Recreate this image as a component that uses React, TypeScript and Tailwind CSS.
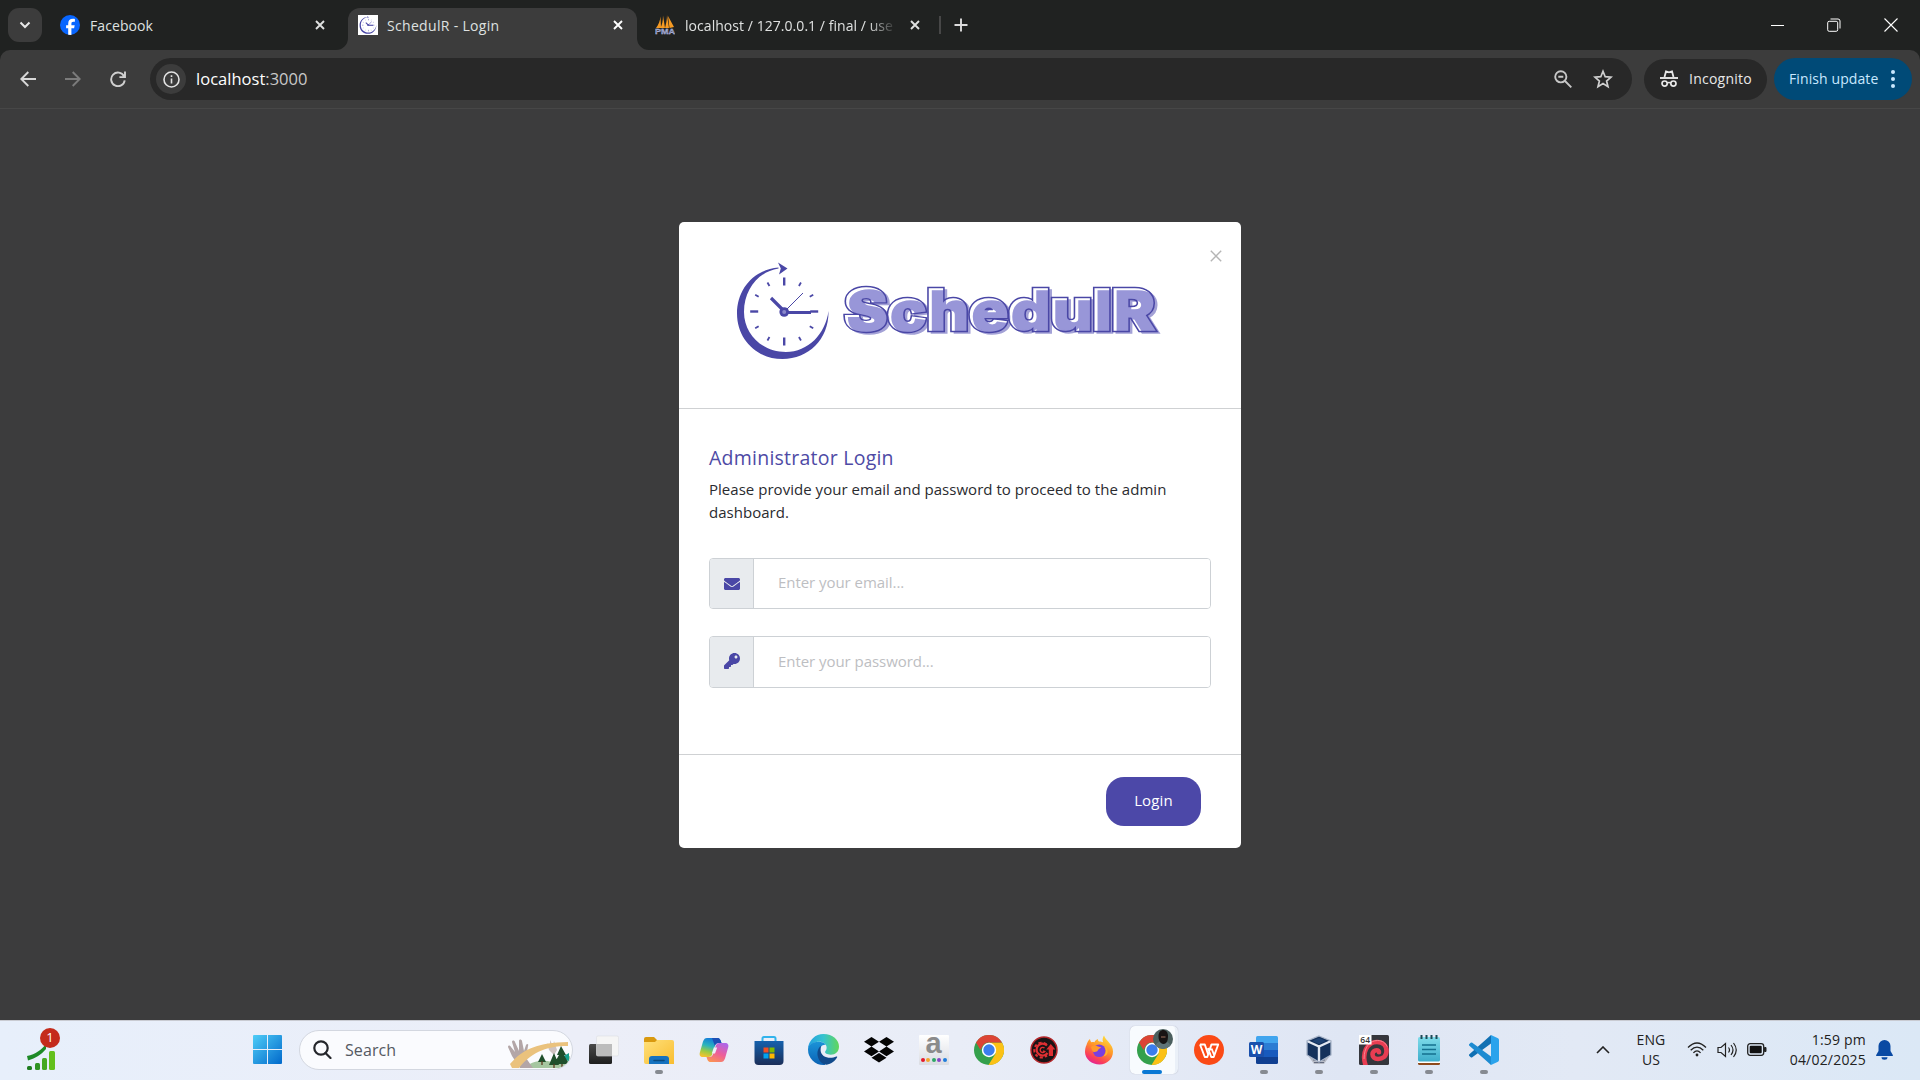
import React from "react";

const UI = "font-['Open_Sans','Noto_Sans',sans-serif]";

function X({ className = "" }: { className?: string }) {
  return (
    <svg width="12" height="12" viewBox="0 0 12 12" className={className}>
      <path d="M2 2l8 8M10 2l-8 8" stroke="currentColor" strokeWidth="1.9" fill="none" />
    </svg>
  );
}

function ClockArt({ className = "", favicon = false }: { className?: string; favicon?: boolean }) {
  const ticks = [30, 60, 120, 150, 210, 240, 300, 330];
  return (
    <svg viewBox="0 0 94 98" className={className} fill="#4a47a6">
      <path d="M42.5 5.5C18 7.5 1 27 1 51.500C1 77 20.500 97 46.500 97C73 97 93 77 92.500 49C89.500 72 72 90 50 90C26.500 90 8 72.500 8 50C8 27.500 22.500 9.500 42.500 6.500Z" />
      <path d="M42 .5l9.500 6-8.500 6 1.800-6z" />
      {[0, 90, 180, 270].map((a) => (
        <rect key={a} x="47" y="15.500" width="2.400" height="8" transform={`rotate(${a} 48.200 49.500)`} />
      ))}
      {ticks.map((a) => (
        <rect key={a} x="47.300" y="16" width="1.800" height="4" transform={`rotate(${a} 48.200 49.500)`} />
      ))}
      <path d="M35 36l14 14" stroke="#4a47a6" strokeWidth={favicon ? 6 : 3.2} />
      <path d="M48 50.500h27" stroke="#4a47a6" strokeWidth={favicon ? 6 : 3} />
      <path d="M48 50l19-19" stroke="#4a47a6" strokeWidth={favicon ? 3 : 1} />
      <circle cx="48.200" cy="50" r="4.800" />
      <circle cx="48.200" cy="50" r="2" fill="#8a88ca" />
    </svg>
  );
}

function Wordmark() {
  const t = {
    fontFamily: "Inter, sans-serif",
    fontWeight: 900,
    fontSize: 56.5,
  } as React.CSSProperties;
  return (
    <svg width="320" height="56" viewBox="0 0 320 56" className="overflow-visible">
      <mask id="wm" maskUnits="userSpaceOnUse" x="-5" y="-10" width="330" height="70">
        <text x="2" y="45" textLength="311" lengthAdjust="spacingAndGlyphs" style={t} fill="#fff" stroke="#fff" strokeWidth="1.600">SchedulR</text>
      </mask>
      <text x="5" y="46.500" textLength="311" lengthAdjust="spacingAndGlyphs" style={t} fill="#a3a1d6" stroke="#a3a1d6" strokeWidth="3.500" aria-hidden="true">SchedulR</text>
      <text x="2" y="45" textLength="311" lengthAdjust="spacingAndGlyphs" style={t} fill="#4a47a6" stroke="#4a47a6" strokeWidth="4.400">SchedulR</text>
      <g mask="url(#wm)">
        <rect x="-5" y="-10" width="330" height="70" fill="#fff" />
        <text x="5" y="47" textLength="311" lengthAdjust="spacingAndGlyphs" style={t} fill="#9896d8" stroke="#9896d8" strokeWidth="1.600" aria-hidden="true">SchedulR</text>
      </g>
    </svg>
  );
}

function TabStrip() {
  return (
    <div className="flex h-[50px] items-start bg-[#202221] text-[14px] text-[#dfe1e0]">
      <div className="ml-2 mt-2 flex h-[34px] w-[34px] items-center justify-center rounded-[11px] bg-[#3c3c3c]">
        <svg width="12" height="8" viewBox="0 0 12 8"><path d="M1.500 1.500L6 6l4.500-4.500" stroke="#e8e8e8" strokeWidth="2" fill="none" /></svg>
      </div>
      <div className="mt-2 flex h-[34px] w-[306px] items-center pl-[18px]">
        <svg width="20" height="20" viewBox="0 0 20 20">
          <circle cx="10" cy="10" r="10" fill="#0866ff" />
          <path d="M8.200 19.800v-6.500H6.100V10.200h2.100V8.800c0-3.400 1.500-5 4.900-5 .6 0 1.400.1 1.800.2v2.800h-1.500c-1.600 0-2 .7-2 2.100v1.300h3.300l-.6 3.100h-2.700v6.600z" fill="#fff" />
        </svg>
        <span className="ml-[10px] w-[224px] tracking-[0.08px]">Facebook</span>
        <X />
      </div>
      <div className="relative mt-2 flex h-[42px] w-[289px] items-start rounded-t-[12px] bg-[#3c3c3c]">
        <svg width="12" height="12" className="absolute -left-3 bottom-0"><path d="M12 0v12H0A12 12 0 0 0 12 0" fill="#3c3c3c" /></svg>
        <svg width="12" height="12" className="absolute -right-3 bottom-0"><path d="M0 0v12h12A12 12 0 0 1 0 0" fill="#3c3c3c" /></svg>
        <div className="flex h-[34px] items-center pl-[10px]">
          <div className="flex h-5 w-5 items-center justify-center bg-white"><ClockArt favicon className="h-[18px] w-[18px]" /></div>
          <span className="ml-[9px] w-[225px] tracking-[0.32px]">SchedulR - Login</span>
          <X className="text-white" />
        </div>
      </div>
      <div className="mt-2 flex h-[34px] items-center pl-[18px]">
        <svg width="20" height="20" viewBox="0 0 20 20">
          <path d="M5.500 1.500C5 6 3.500 10 1 13h5z M8 .5C8 6 7 10 5.500 13H10z M12 0c0 5-1 9-2 13h4z M13 1l6 11-4.500 1z" fill="#f59a23" />
          <text x="0" y="19" fontSize="8" fontWeight="700" textLength="20" lengthAdjust="spacingAndGlyphs" fill="#6c78af" stroke="#d6d9ee" strokeWidth=".3" fontFamily="Liberation Sans, sans-serif">PMA</text>
        </svg>
        <span className="ml-[10px] w-[208px] whitespace-nowrap tracking-[0.05px] [mask-image:linear-gradient(to_right,black_88%,transparent_102%)]">localhost / 127.0.0.1 / final / use</span>
        <X className="ml-4" />
        <div className="ml-[18px] h-[18px] w-[2px] bg-[#474747]" />
        <svg width="14" height="14" viewBox="0 0 14 14" className="ml-[13px]"><path d="M7 .5v13M.5 7h13" stroke="#dcdcdc" strokeWidth="1.900" /></svg>
      </div>
      <div className="ml-auto flex h-[50px] items-center pr-[22px] text-white">
        <svg width="13" height="13" viewBox="0 0 13 13"><path d="M0 6.500h13" stroke="currentColor" strokeWidth="1" /></svg>
        <svg width="14" height="14" viewBox="0 0 14 14" className="ml-[43px]" fill="none" stroke="currentColor"><rect x=".7" y="3.300" width="10" height="10" rx="1.500" /><path d="M3.500 1h7.500a2 2 0 0 1 2 2v7.500" /></svg>
        <svg width="14" height="14" viewBox="0 0 14 14" className="ml-[43px]"><path d="M.5.500l13 13M13.500.500l-13 13" stroke="currentColor" strokeWidth="1.100" /></svg>
      </div>
    </div>
  );
}

function Toolbar() {
  return (
    <div className="bg-[#202221]">
      <div className="flex h-[59px] items-center rounded-t-[10px] border-b border-[#474747] bg-[#3c3c3c] pl-[20px] pr-2">
        <svg width="16" height="16" viewBox="0 0 16 16" fill="none" stroke="#d8d8d8" strokeWidth="1.900"><path d="M16 8H1.500M8.300 1L1.300 8l7 7" /></svg>
        <svg width="16" height="16" viewBox="0 0 16 16" className="ml-[29px]" fill="none" stroke="#7b7b7b" strokeWidth="1.900"><path d="M0 8h14.500M7.700 1l7 7-7 7" /></svg>
        <svg width="16" height="16" viewBox="0 0 16 16" className="ml-[29px]" fill="none" stroke="#d0d0d0" strokeWidth="1.900"><path d="M14 5.200A6.800 6.800 0 1 0 14.700 9.300M15 .5v5.600H9.400" /></svg>
        <div className="ml-[24px] flex h-[42px] w-[1482px] items-center rounded-full bg-[#282828] pl-[6px] text-[16.500px]">
          <div className="flex h-[30px] w-[30px] items-center justify-center rounded-full bg-[#3c3c3c]">
            <svg width="17" height="17" viewBox="0 0 17 17"><circle cx="8.500" cy="8.500" r="7.500" fill="none" stroke="#e3e3e3" strokeWidth="1.600" /><path d="M8.500 7.500v5M8.500 4.300v1.800" stroke="#e3e3e3" strokeWidth="1.600" /></svg>
          </div>
          <span className="ml-[10px] tracking-[0.02px] text-[#c9c9c9]"><span className="text-white">localhost</span>:3000</span>
          <svg width="18" height="18" viewBox="0 0 18 18" className="ml-auto" fill="none" stroke="#c7c7c7" strokeWidth="1.900"><circle cx="6.800" cy="6.800" r="5.600" /><path d="M11 11l6.300 6.300M4.300 6.800h5" /></svg>
          <svg width="20" height="20" viewBox="0 0 20 20" className="ml-[21px] mr-[19px]" fill="none" stroke="#d0d0d0" strokeWidth="1.700"><path d="M10 2.300l2.200 5.400 5.800.5-4.400 3.800 1.400 5.700-5-3.100-5 3.100 1.400-5.700L2 8.200l5.800-.5z" /></svg>
        </div>
        <div className="ml-3 flex h-[41px] w-[123px] items-center rounded-full bg-[#282828] pl-[16px] text-[14px] text-[#e8e8e8]">
          <svg width="18" height="18" viewBox="0 0 18 18" fill="none" stroke="#e8e8e8"><path d="M4.500 7l1.500-5.500 3 .9 3-.9L13.500 7" strokeWidth="1.800" /><path d="M0 8h18" strokeWidth="1.900" /><circle cx="4.600" cy="13.600" r="2.600" strokeWidth="1.700" /><circle cx="13.400" cy="13.600" r="2.600" strokeWidth="1.700" /><path d="M7 13q2-1 4 0" strokeWidth="1.500" /></svg>
          <span className="-mt-px ml-[11px] tracking-[0.25px]">Incognito</span>
        </div>
        <div className="ml-[7px] flex h-[42px] w-[138px] items-center rounded-full bg-[#004a77] pl-[15px] text-[14px] text-[#c8e8ff]">
          <span className="-mt-px whitespace-nowrap tracking-[0.1px]">Finish update</span>
          <div className="ml-auto mr-[17px] flex flex-col gap-[3px]">
            <i className="h-[4px] w-[4px] rounded-full bg-[#c8e8ff]" /><i className="h-[4px] w-[4px] rounded-full bg-[#c8e8ff]" /><i className="h-[4px] w-[4px] rounded-full bg-[#c8e8ff]" />
          </div>
        </div>
      </div>
    </div>
  );
}

function Field({ icon, placeholder, className }: { icon: React.ReactNode; placeholder: string; className: string }) {
  return (
    <div className={`flex overflow-hidden rounded-[4px] border border-[#cdd1d5] ${className}`}>
      <div className="flex w-[44px] items-center justify-center border-r border-[#cdd1d5] bg-[#e8ebee]">{icon}</div>
      <input placeholder={placeholder} className="min-w-0 flex-1 bg-white px-6 pb-[2px] text-[15px] tracking-[-0.05px] outline-none placeholder:text-[#bdbec2]" />
    </div>
  );
}

function LoginModal() {
  return (
    <div className="mt-[113px] flex h-[626px] w-[562px] flex-col rounded-[5px] bg-white text-[#2a2b2f]">
      <div className="flex h-[187px] border-b border-[#cfd1d3]">
        <ClockArt className="ml-[57px] mt-[40px] h-[98px] w-[94px]" />
        <div className="ml-[12px] mt-[63px] h-[56px] w-[320px]"><Wordmark /></div>
        <svg width="12" height="12" viewBox="0 0 12 12" className="ml-[48px] mt-[28px]"><path d="M.8.800l10.400 10.400M11.200.800L.8 11.200" stroke="#b5b5b5" strokeWidth="1.400" /></svg>
      </div>
      <div className="h-[345px] px-[30px] pt-[34px]">
        <h5 className="whitespace-nowrap text-[19.500px] font-medium leading-[30px] tracking-[0.24px] text-[#4e4aa5]">Administrator Login</h5>
        <p className="mt-[5px] text-[15px] leading-[23px] tracking-[0.03px]">Please provide your email and password to proceed to the admin<br />dashboard.</p>
        <Field className="mt-[34px] h-[51px]" placeholder="Enter your email..." icon={
          <svg width="16" height="16" viewBox="0 0 512 512" fill="#4a47a6"><path d="M502.300 190.800c3.900-3.100 9.700-.2 9.700 4.700V400c0 26.500-21.500 48-48 48H48c-26.500 0-48-21.500-48-48V195.600c0-5 5.700-7.800 9.700-4.700 22.400 17.400 52.100 39.500 154.100 113.600 21.100 15.400 56.700 47.800 92.200 47.600 35.700.3 72-32.800 92.300-47.600 102-74.100 131.600-96.300 154-113.700zM256 320c23.200.4 56.600-29.200 73.400-41.400 132.700-96.300 142.800-104.700 173.400-128.700 5.800-4.500 9.200-11.500 9.200-18.900v-19c0-26.500-21.500-48-48-48H48c-26.500 0-48 21.500-48 48v19c0 7.400 3.400 14.300 9.200 18.900 30.600 23.900 40.700 32.400 173.400 128.700 16.800 12.200 50.200 41.800 73.400 41.400z" /></svg>
        } />
        <Field className="mt-[27px] h-[52px]" placeholder="Enter your password..." icon={
          <svg width="16" height="16" viewBox="0 0 512 512" className="-mt-[2px]" fill="#4a47a6"><path d="M512 176c0 97.200-78.800 176-176 176-11.200 0-22.200-1.100-32.800-3.100l-24 27A24 24 0 0 1 261.200 384H224v40c0 13.300-10.700 24-24 24h-40v40c0 13.300-10.700 24-24 24H24c-13.300 0-24-10.700-24-24v-78c0-6.400 2.500-12.500 7-17l161.800-161.800C162.800 213.800 160 195.200 160 176 160 78.800 238.800 0 336 0c97.500 0 176 78.500 176 176zM336 128c0 26.500 21.500 48 48 48s48-21.500 48-48-21.500-48-48-48-48 21.500-48 48z" /></svg>
        } />
      </div>
      <div className="flex flex-1 items-start justify-end border-t border-[#cfd1d3] pr-[40px] pt-[22px]">
        <button className="h-[49px] w-[95px] rounded-[18px] bg-[#4c48a8] pb-[2px] text-[15px] tracking-[0.15px] text-white">Login</button>
      </div>
    </div>
  );
}

function Chrome() {
  return (
    <svg width="30" height="30" viewBox="0 0 30 30">
      <circle cx="15" cy="15" r="15" fill="#34a04c" />
      <path d="M15 7.500h13A15 15 0 0 1 14.500 30L21.500 18.700z" fill="#fbc116" />
      <path d="M2 7.500A15 15 0 0 1 28 7.500H15A7.500 7.500 0 0 0 8.300 11.500L6.500 15z" fill="#dc4435" />
      <circle cx="15" cy="15" r="7.200" fill="#fff" />
      <circle cx="15" cy="15" r="5.700" fill="#3b7ded" />
    </svg>
  );
}

const TaskView = () => (
  <svg width="30" height="30" viewBox="0 0 30 30">
    <defs><linearGradient id="tv" x1="0" y1="0" x2="0" y2="1"><stop offset="0" stopColor="#4a4a4a" /><stop offset="1" stopColor="#1e1e1e" /></linearGradient></defs>
    <rect x="0" y="9" width="23" height="20" rx="1.500" fill="url(#tv)" /><rect x="7.500" y="1" width="22" height="20" rx="1.500" fill="#f5f5f5" stroke="#dcdde2" strokeWidth=".6" /><path d="M7.500 9H23v12H9a1.500 1.500 0 0 1-1.500-1.500z" fill="#bcbcbc" />
  </svg>
);
const Folder = () => (
  <svg width="30" height="30" viewBox="0 0 30 30">
    <defs><linearGradient id="fo" x1="0" y1="0" x2="1" y2="1"><stop offset="0" stopColor="#ffe07a" /><stop offset="1" stopColor="#f9bd30" /></linearGradient></defs>
    <path d="M0 4a2 2 0 0 1 2-2h8l3 3v5H0z" fill="#d9990f" /><path d="M0 7h11l2-2h15a2 2 0 0 1 2 2v22H2a2 2 0 0 1-2-2z" fill="url(#fo)" />
    <path d="M5 29v-5a3 3 0 0 1 3-3h14a3 3 0 0 1 3 3v5z" fill="#1672c0" /><path d="M10 25.500h10" stroke="#0a4a80" strokeWidth="1.500" strokeLinecap="round" />
  </svg>
);
const Copilot = () => (
  <svg width="30" height="30" viewBox="0 0 30 30">
    <defs>
      <linearGradient id="c1" x1=".5" y1="0" x2=".2" y2="1"><stop offset="0" stopColor="#1379da" /><stop offset=".4" stopColor="#2bb4bd" /><stop offset=".7" stopColor="#9bcb43" /><stop offset="1" stopColor="#fbc22d" /></linearGradient>
      <linearGradient id="c2" x1=".7" y1="0" x2=".2" y2="1"><stop offset="0" stopColor="#b065e6" /><stop offset=".5" stopColor="#ee5e99" /><stop offset="1" stopColor="#fb9550" /></linearGradient>
    </defs>
    <path d="M8 3h10c3 0 3.500 2 4.500 5h-3c-2 0-3 1-3.600 3l-2.600 8c-.7 2-1.500 3-4 3H4c-3 0-4-2-3-5L4 6.500C5 4 6 3 8 3z" fill="url(#c1)" />
    <path d="M13 3h5c3 0 3.500 2 4.500 5h-3c-2 0-3 1-3.600 3z" fill="#1c4fb5" />
    <path d="M22 27H12c-3 0-3.500-2-4.500-5h3c2 0 3-1 3.600-3l2.600-8c.7-2 1.500-3 4-3H26c3 0 4 2 3 5l-3 10.500c-1 2.500-2 3.500-4 3.500z" fill="url(#c2)" />
    <path d="M14.800 12.500h3.400l-2.200 6h-3.200z" fill="#edf0fa" />
  </svg>
);
const Store = () => (
  <svg width="30" height="30" viewBox="0 0 30 30">
    <defs><linearGradient id="st" x1="0" y1="0" x2="0" y2="1"><stop offset="0" stopColor="#1561ad" /><stop offset="1" stopColor="#1b2e59" /></linearGradient></defs>
    <path d="M8.500 6V3.500A1.500 1.500 0 0 1 10 2h10a1.500 1.500 0 0 1 1.500 1.500V6" fill="none" stroke="#31b3ec" strokeWidth="2" />
    <path d="M.5 6h29v20a4 4 0 0 1-4 4h-21a4 4 0 0 1-4-4z" fill="url(#st)" />
    <path d="M9.500 12.500h5v5h-5z" fill="#f25022" /><path d="M15.500 12.500h5v5h-5z" fill="#7fba00" /><path d="M9.500 18.500h5v5h-5z" fill="#00a4ef" /><path d="M15.500 18.500h5v5h-5z" fill="#ffb900" />
  </svg>
);
const Edge = () => (
  <svg width="31" height="31" viewBox="0 0 30 30">
    <defs>
      <linearGradient id="e1" x1="0" y1=".5" x2="1" y2=".5"><stop offset="0" stopColor="#239fe0" /><stop offset=".5" stopColor="#36c3cf" /><stop offset="1" stopColor="#62d65a" /></linearGradient>
      <linearGradient id="e2" x1="0" y1="0" x2="0" y2="1"><stop offset="0" stopColor="#1b93d8" /><stop offset="1" stopColor="#0b62b4" /></linearGradient>
    </defs>
    <path d="M0 14A15 15 0 0 1 15 0c9 0 15 6 15 12 0 5-3.500 8-8 8-4 0-5.500-1.500-5.500-2.500s1.500-1.500 1.500-4.500c0-3-3-5.500-7-5.500C6 7.500 1.500 10 0 14z" fill="url(#e1)" />
    <path d="M0 15C0 10.500 4.500 7.500 10 7.500c3.500 0 6 1.200 7.300 3-3-.8-6.300 2-6.300 6.500 0 7 6 13 6 13h-2A15 15 0 0 1 0 15z" fill="url(#e2)" />
    <path d="M12.500 11.500C7 15 8 28 18 29.700c4.500-.7 8.500-3.700 10.200-7.200.3-.7-.2-1-.8-.7-6 2.800-15 1-15.200-6 0-1.600.2-3.200.3-4.300z" fill="#114a8b" />
  </svg>
);
const Dropbox = () => (
  <svg width="30" height="30" viewBox="0 0 30 30"><path d="M7.500 2L15 6.800 7.500 11.600 0 6.800zM22.500 2L30 6.800l-7.500 4.800L15 6.800zM0 16.400l7.500-4.800 7.500 4.800-7.500 4.800zM22.500 11.600l7.500 4.800-7.500 4.800-7.500-4.800zM7.500 22.800L15 18l7.500 4.800L15 27.600z" fill="#050505" /></svg>
);
const LetterA = () => (
  <div className="flex h-[30px] w-[30px] flex-col items-center justify-between rounded-[1px] bg-gradient-to-b from-white to-[#dadce2] pb-[3px]">
    <span className="-mt-[6px] font-['Liberation_Sans',sans-serif] text-[29px] font-bold leading-[28px] text-[#8b8b8b]">a</span>
    <div className="flex gap-[1.500px]"><i className="h-1 w-1 rounded-full bg-[#e41a2c]" /><i className="h-1 w-1 rounded-full bg-[#f2a52c]" /><i className="h-1 w-1 rounded-full bg-[#2fa767]" /><i className="h-1 w-1 rounded-full bg-[#8545c5]" /><i className="h-1 w-1 rounded-full bg-[#1f7ddb]" /></div>
  </div>
);
const RedGear = () => (
  <svg width="28" height="28" viewBox="0 0 28 28">
    <circle cx="14" cy="14" r="13" fill="#1b1415" stroke="#b5272b" strokeWidth="1.500" />
    <path d="M17 9.500A6 6 0 1 0 17.500 17" fill="none" stroke="#df3033" strokeWidth="2.200" />
    <path d="M16.500 8.300A7.500 7.500 0 1 0 17 19.500" fill="none" stroke="#df3033" strokeWidth="2" strokeDasharray="3 2.200" />
    <path d="M20.800 8l4.500 5.500H23v6.500h-4.200v-6.500h-2.500z" fill="#df3033" /><path d="M14.500 12a2.600 2.600 0 1 0 .3 3.600l-1.800-.8" stroke="#df3033" fill="none" strokeWidth="1.400" />
  </svg>
);
const Firefox = () => (
  <svg width="30" height="30" viewBox="0 0 30 30">
    <defs><linearGradient id="ff" x1=".8" y1="0" x2=".3" y2="1"><stop offset="0" stopColor="#ffe43c" /><stop offset=".45" stopColor="#ff9629" /><stop offset=".8" stopColor="#fb3f58" /><stop offset="1" stopColor="#e1209a" /></linearGradient></defs>
    <path d="M2.500 10c.5-2.500 2-5 3.500-6 .2 1.500.7 2.500 1.500 3.300 1-.3 2-.3 3 0C11 5.500 12.500 4.500 14 4c-.3 1 0 1.500 1 2.500 2 0 3 .2 4 .7C18 4.500 19 2 20 .5c1 3 3 4.500 5 7 2.500 3 4 5.500 4 9C29 24 23 29.500 15.500 29.500S1 24 1 17c0-2.500.5-5 1.500-7z" fill="url(#ff)" />
    <circle cx="15.200" cy="15.700" r="6.300" fill="#7a3fe0" /><path d="M7 12c2-2 5-2 7-.5 1 .5 2.500.4 3 .6-.3 1.400-2.500 1.700-3 2.900-.3 1.500-2 1.500-3.500 2-1.500 1-3-3-3.500-5z" fill="#ff9a2a" /><path d="M20 11c3 3 2.500 8-1 10.500 5-.5 7-7 1-10.500z" fill="#ffb52c" />
  </svg>
);
const ActiveChrome = () => (
  <div className="relative"><Chrome />
    <svg width="20" height="20" viewBox="0 0 20 20" className="absolute -right-[6px] -top-[6px]"><clipPath id="av"><circle cx="10" cy="10" r="10" /></clipPath><g clipPath="url(#av)"><rect width="20" height="20" fill="#4b5f5e" /><path d="M2 20c0-6 4-8 8-8s8 2 8 8z" fill="#5f7376" /><path d="M5.500 7c0-8 9.500-8 9.500 0 0 4-1 8-4.500 8s-5-4-5-8z" fill="#181414" /><path d="M8 7h4.500v2H8z" fill="#5b4238" /></g></svg>
  </div>
);
const Wps = () => (
  <svg width="30" height="30" viewBox="0 0 30 30"><circle cx="15" cy="15" r="15" fill="#fb4a16" /><path d="M6 9.500h4.800L14 19l3.500-9.500h6.700L19.700 22h-2.500L14 13M6 9.500L10.800 22h2.500l4.200-12.500M17.500 13.500l2.700 6.500" fill="none" stroke="#fff" strokeWidth="1.900" strokeLinejoin="round" /></svg>
);
const Word = () => (
  <svg width="30" height="30" viewBox="0 0 30 30">
    <path d="M7 2.500A1.500 1.500 0 0 1 8.500 1h19A1.500 1.500 0 0 1 29 2.500V8H7z" fill="#41a5ee" /><path d="M7 8h22v7H7z" fill="#2b7cd3" /><path d="M7 15h22v7H7z" fill="#185abd" /><path d="M7 22h22v5.500a1.500 1.500 0 0 1-1.500 1.500h-19A1.500 1.500 0 0 1 7 27.500z" fill="#103f91" />
    <rect x="0" y="7" width="15" height="15" rx="1.500" fill="#1a50ac" /><text x="7.500" y="18.800" textAnchor="middle" fontSize="12" fontWeight="700" fill="#fff" fontFamily="Open Sans, sans-serif">W</text>
  </svg>
);
const VBox = () => (
  <svg width="30" height="30" viewBox="0 0 30 30">
    <path d="M5 22l5 7h10l5-7z" fill="#b7bbc5" /><path d="M9 25h12M10 27.500h10" stroke="#636b80" strokeWidth="1" /><path d="M15 1l12 5v14l-12 7-12-7V6z" fill="#15325c" /><path d="M3 6l12 5.500L27 6M15 11.500V27" fill="none" stroke="#e4e9f2" strokeWidth="2.400" /><path d="M15 1l12 5v14l-12 7-12-7V6z" fill="none" stroke="#a9b5c9" strokeWidth="1.300" /><path d="M15 3l7 3-7 3-7-3z" fill="#1f4374" />
  </svg>
);
const Spiral = () => (
  <svg width="30" height="30" viewBox="0 0 30 30">
    <rect width="30" height="30" rx="1.500" fill="#35363c" />
    <path d="M6.500 30C2.500 18 8 7 18 7c5.500 0 9.500 3.500 9.500 9s-4 8-8.500 8c-3.500 0-5.500-2.200-5.500-4.800 0-2.400 1.800-4 4-4 1.500 0 2.500 1 2.500 2" fill="none" stroke="#e93d52" strokeWidth="4.600" strokeLinecap="round" /><path d="M5 24C5 12 11 5.500 18.500 5.500c5 0 8 2.500 9.500 6" fill="none" stroke="#fa8591" strokeWidth="1" />
    <rect width="12.500" height="9.500" fill="#fff" /><text x="6.200" y="8.200" textAnchor="middle" fontSize="8.500" fontWeight="600" fill="#333" fontFamily="Open Sans, sans-serif">64</text>
  </svg>
);
const Notepad = () => (
  <svg width="30" height="30" viewBox="0 0 30 30">
    <defs><linearGradient id="np" x1="0" y1="0" x2="0" y2="1"><stop offset="0" stopColor="#7fdcea" /><stop offset="1" stopColor="#3dadcb" /></linearGradient></defs>
    <rect x="4" y="25" width="22" height="5" rx="1.500" fill="#8e4a1d" /><rect x="4" y="24" width="22" height="4" fill="#fff" /><rect x="4" y="2" width="22" height="24.500" rx="1.500" fill="url(#np)" />
    <path d="M8 10h14M8 14.500h14M8 19h14" stroke="#14708f" strokeWidth="1.500" /><path d="M7.500 0v4M12.500 0v4M17.500 0v4M22.500 0v4" stroke="#1d4a57" strokeWidth="2" />
  </svg>
);
const VSCode = () => (
  <svg width="30" height="30" viewBox="0 0 30 30">
    <path d="M22 0l7 3.300a2 2 0 0 1 1 1.700v20a2 2 0 0 1-1 1.700L22 30z" fill="#2ba3ec" />
    <path d="M22 0v8.500L3.300 22.200a1.200 1.200 0 0 1-1.600 0L.4 21a1.200 1.200 0 0 1 0-1.800z" fill="#1070b3" />
    <path d="M22 30v-8.500L3.300 7.800a1.200 1.200 0 0 0-1.600 0L.4 9a1.200 1.200 0 0 0 0 1.800z" fill="#1d8bd1" />
  </svg>
);

const apps: { C: React.FC; run?: boolean; active?: boolean }[] = [
  { C: TaskView }, { C: Folder, run: true }, { C: Copilot }, { C: Store }, { C: Edge }, { C: Dropbox }, { C: LetterA }, { C: Chrome },
  { C: RedGear }, { C: Firefox }, { C: ActiveChrome, active: true }, { C: Wps }, { C: Word, run: true }, { C: VBox, run: true }, { C: Spiral, run: true }, { C: Notepad, run: true }, { C: VSCode, run: true },
];

function Taskbar() {
  return (
    <div className="flex h-[60px] items-center border-t border-[#c9cbd2] bg-[linear-gradient(to_right,#e7effb,#eceef8_30%,#e9edf7_50%,#dfe6f4_70%,#e2e9f5_82%,#dbe8f6)] pb-[2px] text-[#222]">
      <div className="relative ml-[27px] h-[46px] w-[33px]">
        <svg width="28" height="28" viewBox="0 0 28 28" className="mt-[16px]">
          <path d="M0 13C9 11 14 7 19 1v5C14 12 9 15 1 17.500z" fill="#1d8a27" /><rect x="0" y="23" width="5" height="4" rx="1.500" fill="#1f7d20" /><rect x="8" y="20" width="5" height="7" rx="1.500" fill="#2f9323" /><rect x="15" y="15" width="5" height="12" rx="1.500" fill="#46a822" /><rect x="22" y="8" width="6" height="19" rx="1.500" fill="#63c01c" />
        </svg>
        <span className="absolute left-[13px] top-[1px] flex h-5 w-5 items-center justify-center rounded-full bg-[#c42b1c] text-[13px] text-white">1</span>
      </div>
      <svg width="29" height="29" viewBox="0 0 29 29" className="ml-[193px]">
        <defs><linearGradient id="wn" x1="0" y1="0" x2="1" y2="1"><stop offset="0" stopColor="#4fcdf7" /><stop offset="1" stopColor="#0169cb" /></linearGradient></defs>
        <path d="M0 1a1 1 0 0 1 1-1h13v14H0zM15 0h13a1 1 0 0 1 1 1v13H15zM0 15h14v14H1a1 1 0 0 1-1-1zM15 15h14v13a1 1 0 0 1-1 1H15z" fill="url(#wn)" />
      </svg>
      <div className="ml-[17px] flex h-[40px] w-[274px] items-center overflow-hidden rounded-full border border-[#d3d7e0] bg-[#fafbfe] pl-[13px]">
        <svg width="19" height="19" viewBox="0 0 19 19" fill="none" stroke="#24262b" strokeWidth="2.200"><circle cx="8" cy="8" r="6.700" /><path d="M12.500 13l5 5" strokeLinecap="round" /></svg>
        <span className="ml-[13px] text-[16px] tracking-[0.1px] text-[#555962]">Search</span>
        <svg width="62" height="30" viewBox="0 0 62 30" className="ml-auto mr-[2px] mt-[6px]">
          <path d="M16 30c8-7 18-9 28-6l18-6v12z" fill="#a5c6a0" /><path d="M52 20l9-5v8z" fill="#17a08c" />
          <path d="M4 18L0 9c0-2 2-2 3 0l4 5L4 4c0-2 2.500-2 3 0l4 9V3c0-2 2.500-2 3 0l2 10 2-6c1-2 3-1 2 1l-2 12 7 10H12z" fill="#b3a6a7" />
          <path d="M41 12l-2-7 3 4V2l3 6 1-5 3 9-3 5z" fill="#cfc4c2" />
          <path d="M2 26C16 10 30 5 60 4v4C36 8 22 16 11 30H4z" fill="#eac27d" />
          <path d="M34 16l4 8h-8zM53 8l5 9h-2l5 9H46l5-9h-2zM46 15l5 12H41z" fill="#1f4f2c" /><path d="M34 23v4M46 26v4M54 26v4" stroke="#5b3a20" strokeWidth="1.300" />
        </svg>
      </div>
      <div className="ml-[3px] flex">
        {apps.map(({ C, run, active }, i) => (
          <div key={i} className="flex w-[55px] justify-center">
            <div className={active ? "relative flex h-[48px] w-[48px] items-center justify-center rounded-[5px] border-r-[3px] border-[#eaf0f8] bg-[#f8fbfe] shadow-[0_0_1px_#aab]" : "relative flex h-[48px] w-[48px] items-center justify-center"}>
              <C />
              {run && <i className="absolute bottom-0 h-1 w-2 rounded-full bg-[#868a91]" />}
              {active && <i className="absolute bottom-0 h-1 w-5 rounded-full bg-[#0a78d4]" />}
            </div>
          </div>
        ))}
      </div>
      <svg width="14" height="8" viewBox="0 0 14 8" className="ml-[85px]"><path d="M1 7l6-6 6 6" fill="none" stroke="#222" strokeWidth="1.600" /></svg>
      <div className="ml-[25px] w-[32px] text-center text-[14px] leading-[20px] tracking-[0.1px]">ENG<br />US</div>
      <svg width="20" height="15" viewBox="0 0 20 15" className="ml-[20px]" fill="none" stroke="#222" strokeWidth="1.300"><path d="M1 5.500Q10-3.500 19 5.500M3.700 8.200Q10 2 16.300 8.200M6.400 10.900Q10 7 13.600 10.900" /><circle cx="10" cy="13" r="1.400" fill="#222" stroke="none" /></svg>
      <svg width="20" height="16" viewBox="0 0 20 16" className="ml-[10px]" fill="none" stroke="#222" strokeWidth="1.200"><path d="M1 5.500h3l4.500-4v13l-4.500-4H1zM11.500 5.500q2 2.500 0 5M14 3q4 5 0 10M16.500 1q5.500 7 0 14" /></svg>
      <svg width="20" height="13" viewBox="0 0 20 13" className="ml-[10px]"><rect x=".7" y=".7" width="16" height="11.600" rx="2.500" fill="none" stroke="#222" strokeWidth="1.300" /><rect x="2.700" y="2.700" width="12" height="7.600" rx="1" fill="#111" /><path d="M17.500 4.500h1.500v4h-1.500z" fill="#222" stroke="#222" /></svg>
      <div className="ml-auto text-right text-[14px] leading-[20px] tracking-[0.2px]">1:59 pm<br />04/02/2025</div>
      <svg width="17" height="20" viewBox="0 0 17 20" className="ml-[10px] mr-[27px]" fill="#0a4aa3"><path d="M8.500 0a6 6 0 0 1 6 6v5l2.300 4c.3.700 0 1-.6 1H.8c-.6 0-.9-.3-.6-1l2.300-4V6a6 6 0 0 1 6-6z" /><path d="M5.500 17.300h6a3 2.500 0 0 1-6 0z" /></svg>
    </div>
  );
}

export default function App() {
  return (
    <div className={`flex h-[1080px] w-[1920px] flex-col overflow-hidden bg-[#3c3c3d] ${UI}`}>
      <TabStrip />
      <Toolbar />
      <main className="flex flex-1 items-start justify-center"><LoginModal /></main>
      <Taskbar />
    </div>
  );
}
